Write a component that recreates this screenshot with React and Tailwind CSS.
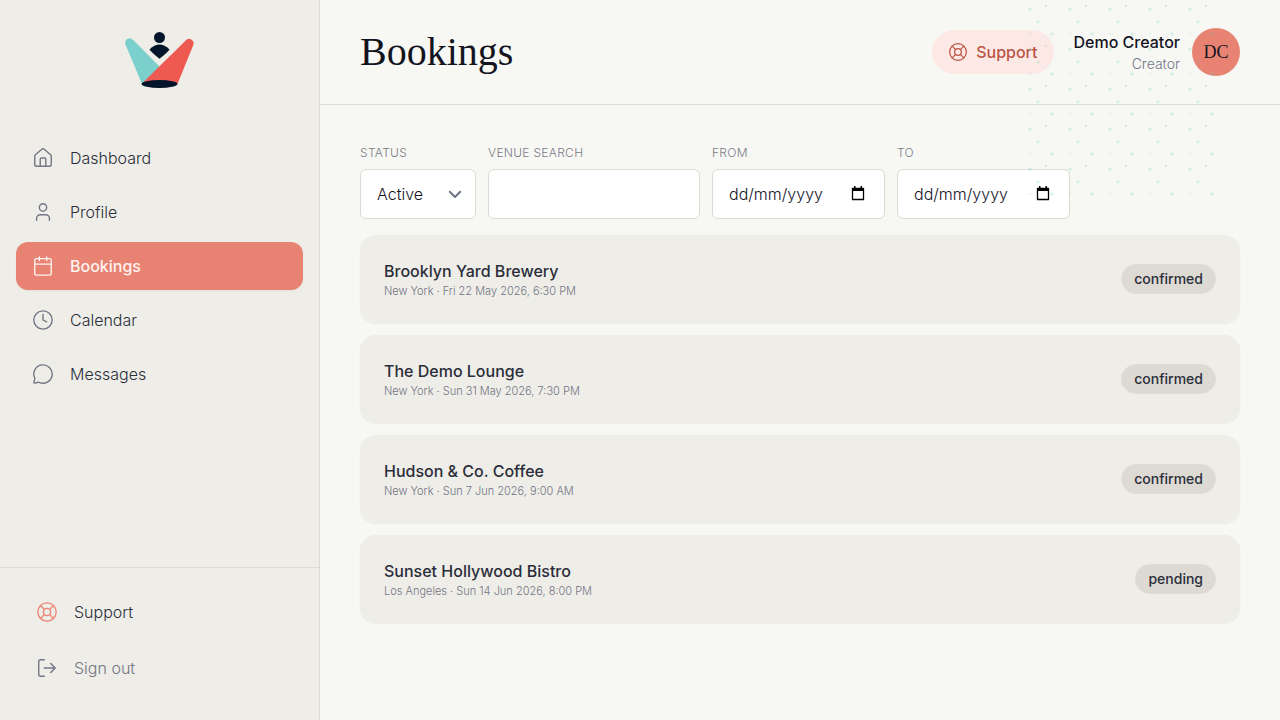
import React, { useState } from "react";

const navItems = [
  { name: "Dashboard", icon: "home" },
  { name: "Profile", icon: "user" },
  { name: "Bookings", icon: "calendar" },
  { name: "Calendar", icon: "clock" },
  { name: "Messages", icon: "message" },
];

const bookings = [
  { id: 1, venue: "Brooklyn Yard Brewery", details: "New York · Fri 22 May 2026, 6:30 PM", status: "confirmed" },
  { id: 2, venue: "The Demo Lounge", details: "New York · Sun 31 May 2026, 7:30 PM", status: "confirmed" },
  { id: 3, venue: "Hudson & Co. Coffee", details: "New York · Sun 7 Jun 2026, 9:00 AM", status: "confirmed" },
  { id: 4, venue: "Sunset Hollywood Bistro", details: "Los Angeles · Sun 14 Jun 2026, 8:00 PM", status: "pending" },
];

const Icon = ({ name, className }) => (
  <svg
    viewBox="0 0 24 24"
    fill="none"
    stroke="currentColor"
    strokeWidth="1.5"
    strokeLinecap="round"
    strokeLinejoin="round"
    className={className}
    aria-hidden="true"
  >
    {name === "home" && (
      <>
        <path d="M15 21v-8a1 1 0 0 0-1-1h-4a1 1 0 0 0-1 1v8" />
        <path d="M3 10a2 2 0 0 1 .709-1.528l7-6a2 2 0 0 1 2.582 0l7 6A2 2 0 0 1 21 10v9a2 2 0 0 1-2 2H5a2 2 0 0 1-2-2z" />
      </>
    )}
    {name === "user" && (
      <>
        <circle cx="12" cy="7" r="4" />
        <path d="M5 21v-2a4 4 0 0 1 4-4h6a4 4 0 0 1 4 4v2" />
      </>
    )}
    {name === "calendar" && (
      <>
        <rect x="3" y="4" width="18" height="18" rx="2" />
        <path d="M8 2v4M16 2v4M3 10h18" />
      </>
    )}
    {name === "clock" && (
      <>
        <circle cx="12" cy="12" r="10" />
        <path d="M12 6v6l4 2" />
      </>
    )}
    {name === "message" && (
      <path d="M2.992 16.342a2 2 0 0 1 .094 1.167l-1.065 3.29a1 1 0 0 0 1.236 1.168l3.413-.998a2 2 0 0 1 1.099.092 10 10 0 1 0-4.777-4.719" />
    )}
    {name === "support" && (
      <>
        <circle cx="12" cy="12" r="10" />
        <circle cx="12" cy="12" r="4" />
        <path d="m4.93 4.93 4.24 4.24M14.83 9.17l4.24-4.24M14.83 14.83l4.24 4.24M9.17 14.83l-4.24 4.24" />
      </>
    )}
    {name === "logout" && <path d="M9 21H5a2 2 0 0 1-2-2V5a2 2 0 0 1 2-2h4M16 17l5-5-5-5M21 12H9" />}
    {name === "chevron" && <path d="m5 9 7 7 7-7" strokeWidth="2.6" />}
  </svg>
);

const Logo = () => (
  <svg viewBox="0 0 72 58" className="h-[58px] w-[72px]" role="img" aria-label="Logo">
    <path d="M1.500 14.500A4.500 4.500 0 0 1 9 9.800L36 37 18 54Z" fill="#7bcfcc" />
    <path d="M62.500 9.800A4.500 4.500 0 0 1 69.500 14.500L53.500 54H17.500Z" fill="#ee5a52" />
    <ellipse cx="35.500" cy="54" rx="18" ry="4" fill="#04152b" />
    <circle cx="35.500" cy="7.500" r="5.500" fill="#04152b" />
    <path d="M25.500 19.500Q35.500 9.500 45.500 19.500Q44 22 35.500 28.800Q27 22 25.500 19.500Z" fill="#04152b" />
  </svg>
);

const DotPattern = () => (
  <svg className="pointer-events-none absolute top-0 right-[60px] z-10 h-[196px] w-[192px]" aria-hidden="true">
    <defs>
      <pattern id="dots" width="40" height="40" patternUnits="userSpaceOnUse">
        <g fill="#5cc4ae">
          <circle cx="18" cy="6" r="1" opacity="0.3" />
          <circle cx="2" cy="9" r="1.8" opacity="0.2" />
          <circle cx="28" cy="18" r="1" opacity="0.15" />
          <circle cx="10" cy="22" r="1.6" opacity="0.2" />
          <circle cx="24" cy="34" r="1.8" opacity="0.2" />
          <circle cx="2" cy="34" r="1" opacity="0.2" />
        </g>
      </pattern>
    </defs>
    <rect width="192" height="196" fill="url(#dots)" />
  </svg>
);

const fieldClass =
  "h-[50px] w-full rounded-md border border-[#dcdad2] bg-white px-4 text-base text-[#14141f] placeholder:text-[#14141f]";
const labelClass = "text-xs leading-4 tracking-wide text-[#7b7b88] uppercase";

const DateField = ({ id, label, value, onChange }) => (
  <div className="flex w-[173px] flex-col gap-2">
    <label htmlFor={id} className={labelClass}>{label}</label>
    <div className="relative">
      <input
        id={id}
        type="text"
        inputMode="numeric"
        placeholder="dd/mm/yyyy"
        value={value}
        onChange={(e) => onChange(e.target.value)}
        className={fieldClass}
      />
      <svg viewBox="0 0 14 16" className="pointer-events-none absolute top-4 right-5 h-4 w-[14px]" aria-hidden="true">
        <path d="M1.500 3.500h11v11h-11Z" fill="none" stroke="#000" strokeWidth="1.300" strokeLinejoin="round" />
        <path d="M1 3h12v3H1ZM3 1h1.500v2H3ZM9.500 1H11v2H9.500Z" fill="#000" />
      </svg>
    </div>
  </div>
);

const App = () => {
  const [active, setActive] = useState("Bookings");
  const [status, setStatus] = useState("Active");
  const [search, setSearch] = useState("");
  const [from, setFrom] = useState("");
  const [to, setTo] = useState("");

  const filtered = bookings.filter((booking) =>
    booking.venue.toLowerCase().includes(search.toLowerCase())
  );

  return (
    <div className="relative flex min-h-screen bg-[#f7f8f3] font-['Inter','Liberation_Sans',sans-serif] font-light text-[#2b2d3a]">
      <aside className="flex w-80 shrink-0 flex-col border-r border-[#dcdad4] bg-[#eeede8]">
        <div className="flex justify-center pt-[30px] pb-[46px]">
          <Logo />
        </div>

        <nav className="flex flex-1 flex-col gap-1.5 px-4">
          {navItems.map((item) => (
            <a
              key={item.name}
              href="#"
              onClick={() => setActive(item.name)}
              className={
                active === item.name
                  ? "flex h-12 items-center gap-4 rounded-xl bg-[#e88373] px-4 font-medium text-[#fdf3f0] shadow-xs"
                  : "flex h-12 items-center gap-4 rounded-xl px-4"
              }
            >
              <Icon
                name={item.icon}
                className={active === item.name ? "size-[22px]" : "size-[22px] text-[#737584]"}
              />
              {item.name}
            </a>
          ))}
        </nav>

        <div className="flex flex-col gap-2 border-t border-[#dcdad4] px-5 pt-5 pb-7">
          <a href="#" className="flex h-12 items-center gap-4 px-4">
            <Icon name="support" className="size-[22px] text-[#ec8677]" />
            Support
          </a>
          <button type="button" className="flex h-12 items-center gap-4 px-4 text-[#737584]">
            <Icon name="logout" className="size-[22px]" />
            Sign out
          </button>
        </div>
      </aside>

      <main className="min-w-0 flex-1">
        <header className="flex items-center justify-between border-b border-[#dcdad4] px-10 py-7">
          <h1 className="font-['Liberation_Serif',serif] text-[40px] leading-10 font-normal text-[#14141f]">Bookings</h1>
          <div className="flex items-center gap-5">
            <a href="#" className="flex h-11 items-center gap-2 rounded-full bg-[#fce9e5] px-4 font-medium text-[#bb5445]">
              <Icon name="support" className="size-5" />
              Support
            </a>
            <div className="flex items-center gap-3">
              <div className="text-right">
                <p className="leading-6 font-medium text-[#14141f]">Demo Creator</p>
                <p className="text-sm text-[#737584]">Creator</p>
              </div>
              <div className="flex size-12 items-center justify-center rounded-full bg-[#e88373] font-['Liberation_Serif',serif] text-lg font-normal text-[#14141f]">
                DC
              </div>
            </div>
          </div>
        </header>

        <section className="px-10 pt-10">
          {/* Filters */}
          <div className="flex flex-wrap gap-3">
            <div className="flex w-[116px] flex-col gap-2">
              <label htmlFor="status" className={labelClass}>Status</label>
              <div className="relative">
                <select
                  id="status"
                  value={status}
                  onChange={(e) => setStatus(e.target.value)}
                  className={`${fieldClass} appearance-none`}
                >
                  <option>Active</option>
                  <option>Past</option>
                  <option>All</option>
                </select>
                <Icon name="chevron" className="pointer-events-none absolute top-4 right-3 size-[18px] text-[#6b7280]" />
              </div>
            </div>
            <div className="flex w-[212px] flex-col gap-2">
              <label htmlFor="venue" className={labelClass}>Venue search</label>
              <input
                id="venue"
                type="text"
                value={search}
                onChange={(e) => setSearch(e.target.value)}
                className={fieldClass}
              />
            </div>
            <DateField id="from" label="From" value={from} onChange={setFrom} />
            <DateField id="to" label="To" value={to} onChange={setTo} />
          </div>

          {/* Booking list */}
          <ul className="mt-4 flex flex-col gap-3">
            {filtered.map((booking) => (
              <li
                key={booking.id}
                className="flex h-[88px] items-center justify-between rounded-2xl bg-[#eeede8] px-6 shadow-xs"
              >
                <div>
                  <h2 className="leading-6 font-medium">{booking.venue}</h2>
                  <p className="text-[11px] leading-4 text-[#737584]">{booking.details}</p>
                </div>
                <span className="rounded-full border border-[#dfddd7] bg-[#dcdad3] px-3 py-1 text-sm font-medium">
                  {booking.status}
                </span>
              </li>
            ))}
          </ul>
        </section>
      </main>

      <DotPattern />
    </div>
  );
};

export default App;
